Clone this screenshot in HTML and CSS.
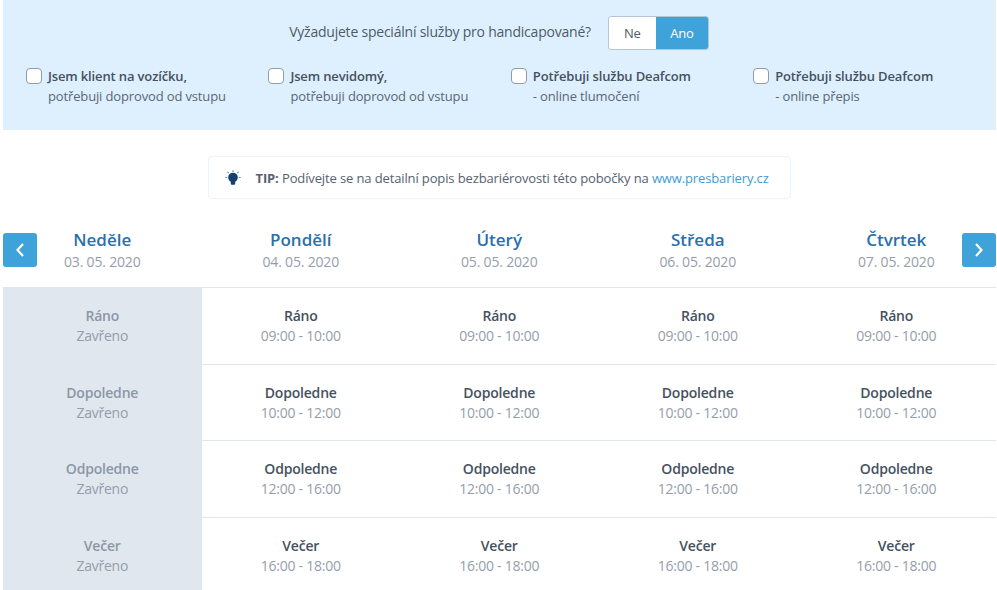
FILE: index.html
```html
<!DOCTYPE html>
<html lang="cs">
<head>
<meta charset="utf-8">
<title>Rezervace</title>
<link rel="stylesheet" href="styles.css">
</head>
<body>
<main class="page">
  <section class="panel">
    <div class="question">
      <span class="question-text">Vyžadujete speciální služby pro handicapované?</span>
      <div class="toggle"><span class="toggle-btn toggle-no">Ne</span><span class="toggle-btn is-on">Ano</span></div>
    </div>
    <div class="options">
      <label class="option"><span class="box"></span><span class="option-text"><b>Jsem klient na vozíčku,</b><span>potřebuji doprovod od vstupu</span></span></label>
      <label class="option"><span class="box"></span><span class="option-text"><b>Jsem nevidomý,</b><span>potřebuji doprovod od vstupu</span></span></label>
      <label class="option"><span class="box"></span><span class="option-text"><b>Potřebuji službu Deafcom</b><span>- online tlumočení</span></span></label>
      <label class="option"><span class="box"></span><span class="option-text"><b>Potřebuji službu Deafcom</b><span>- online přepis</span></span></label>
    </div>
  </section>

  <div class="tip-wrap">
    <div class="tip">
      <svg class="tip-icon" width="16" height="16" viewBox="0 0 16 16" aria-hidden="true">
        <circle cx="8" cy="7.500" r="4.800" fill="#14406e"/>
        <rect x="5.800" y="11.500" width="4.400" height="3.200" rx="1" fill="#14406e"/>
        <path d="M8 .2v1.800M2.500 1.900l1.300 1.300M13.500 1.900l-1.300 1.300M.3 7.500h1.900M13.800 7.500h1.900" stroke="#3f9fd6" stroke-width="1.200" fill="none"/>
      </svg>
      <span><b>TIP:</b> Podívejte se na detailní popis bezbariérovosti této pobočky na <a href="#">www.presbariery.cz</a></span>
    </div>
  </div>

  <section class="schedule">
    <button class="nav nav-prev" aria-label="Předchozí"><svg width="12" height="16" viewBox="0 0 12 16"><path d="M9 2 3.500 8 9 14" fill="none" stroke="#fff" stroke-width="2.200"/></svg></button>
    <button class="nav nav-next" aria-label="Další"><svg width="12" height="16" viewBox="0 0 12 16"><path d="M3 2 8.500 8 3 14" fill="none" stroke="#fff" stroke-width="2.200"/></svg></button>
    <div class="grid">
      <div class="head"><h2>Neděle</h2><p>03. 05. 2020</p></div>
      <div class="head"><h2>Pondělí</h2><p>04. 05. 2020</p></div>
      <div class="head"><h2>Úterý</h2><p>05. 05. 2020</p></div>
      <div class="head"><h2>Středa</h2><p>06. 05. 2020</p></div>
      <div class="head"><h2>Čtvrtek</h2><p>07. 05. 2020</p></div>

      <div class="cell closed"><b>Ráno</b><span>Zavřeno</span></div>
      <div class="cell"><b>Ráno</b><span>09:00 - 10:00</span></div>
      <div class="cell"><b>Ráno</b><span>09:00 - 10:00</span></div>
      <div class="cell"><b>Ráno</b><span>09:00 - 10:00</span></div>
      <div class="cell"><b>Ráno</b><span>09:00 - 10:00</span></div>

      <div class="cell closed"><b>Dopoledne</b><span>Zavřeno</span></div>
      <div class="cell"><b>Dopoledne</b><span>10:00 - 12:00</span></div>
      <div class="cell"><b>Dopoledne</b><span>10:00 - 12:00</span></div>
      <div class="cell"><b>Dopoledne</b><span>10:00 - 12:00</span></div>
      <div class="cell"><b>Dopoledne</b><span>10:00 - 12:00</span></div>

      <div class="cell closed"><b>Odpoledne</b><span>Zavřeno</span></div>
      <div class="cell"><b>Odpoledne</b><span>12:00 - 16:00</span></div>
      <div class="cell"><b>Odpoledne</b><span>12:00 - 16:00</span></div>
      <div class="cell"><b>Odpoledne</b><span>12:00 - 16:00</span></div>
      <div class="cell"><b>Odpoledne</b><span>12:00 - 16:00</span></div>

      <div class="cell closed"><b>Večer</b><span>Zavřeno</span></div>
      <div class="cell"><b>Večer</b><span>16:00 - 18:00</span></div>
      <div class="cell"><b>Večer</b><span>16:00 - 18:00</span></div>
      <div class="cell"><b>Večer</b><span>16:00 - 18:00</span></div>
      <div class="cell"><b>Večer</b><span>16:00 - 18:00</span></div>
    </div>
  </section>
</main>
</body>
</html>
```
FILE: styles.css
```css
* { box-sizing: border-box; }
html, body { margin: 0; height: 590px; overflow: hidden; background: #fff; }
body { font-family: "Open Sans", "Liberation Sans", sans-serif; font-size: 13px; color: #4d5a69; }
.page { padding: 0 1px 0 3px; }

.panel { height: 130px; background: #def0fe; padding-top: 16px; }
.question { display: flex; justify-content: center; align-items: center; gap: 17px; padding-right: 1px; }
.question-text { font-size: 14px; letter-spacing: -0.22px; color: #4f5b69; position: relative; top: -2px; }
.toggle { display: flex; width: 101px; height: 34px; border: 1px solid #b5c5d6; border-radius: 3px; overflow: hidden; background: #fff; }
.toggle-btn { display: flex; flex: 1; align-items: center; justify-content: center; font-size: 13px; letter-spacing: -0.3px; color: #4f5b69; }
.toggle-no { flex: none; width: 47px; }
.toggle-btn.is-on { background: #3fa2d8; color: #fff; }

.options { display: grid; grid-template-columns: repeat(4, 242.400px); padding: 17px 0 0 23px; }
.option { display: flex; gap: 6px; }
.box { width: 16px; height: 16px; margin-top: 1px; background: #fff; border: 1px solid #8f9bab; border-radius: 4px; flex: none; }
.option-text { display: flex; flex-direction: column; margin-top: -1px; line-height: 20px; font-size: 13px; letter-spacing: -0.14px; color: #5b6775; }
.option-text b { font-weight: 600; color: #46515f; }

.tip-wrap { display: flex; justify-content: center; padding-top: 26px; padding-right: 1px; }
.tip { display: flex; align-items: center; gap: 15px; width: 583px; height: 43px; padding-left: 16px; border: 1px solid #e9f4fc; border-radius: 4px; font-size: 13px; letter-spacing: -0.125px; color: #56616f; }
.tip b { font-weight: 700; }
.tip a { color: #3f9bd2; text-decoration: none; }
.tip-icon { flex: none; }

.schedule { position: relative; margin-top: 17px; }
.nav { position: absolute; top: 17px; width: 34px; height: 34px; padding: 0; border: 0; border-radius: 3px; background: #3fa2d8; display: flex; align-items: center; justify-content: center; }
.nav-prev { left: 0; }
.nav-next { right: 0; }
.grid { display: grid; grid-template-columns: repeat(5, 198.500px); grid-auto-rows: 76.600px; grid-template-rows: 71px; }
.head { text-align: center; padding-top: 12px; }
.head h2 { margin: 0; font-size: 17px; line-height: 24px; font-weight: 600; color: #2a70aa; }
.head p { margin: 0; font-size: 14px; letter-spacing: -0.18px; line-height: 20px; color: #949eaa; }
.cell { display: flex; flex-direction: column; align-items: center; padding-top: 18px; border-top: 1px solid #e0e6ed; line-height: 20px; font-size: 14px; letter-spacing: -0.25px; color: #949eaa; }
.cell b { font-size: 14px; letter-spacing: -0.2px; font-weight: 600; color: #46515f; }
.cell.closed { background: #e0e7ef; }
.cell.closed b { color: #8c97a5; }
```
